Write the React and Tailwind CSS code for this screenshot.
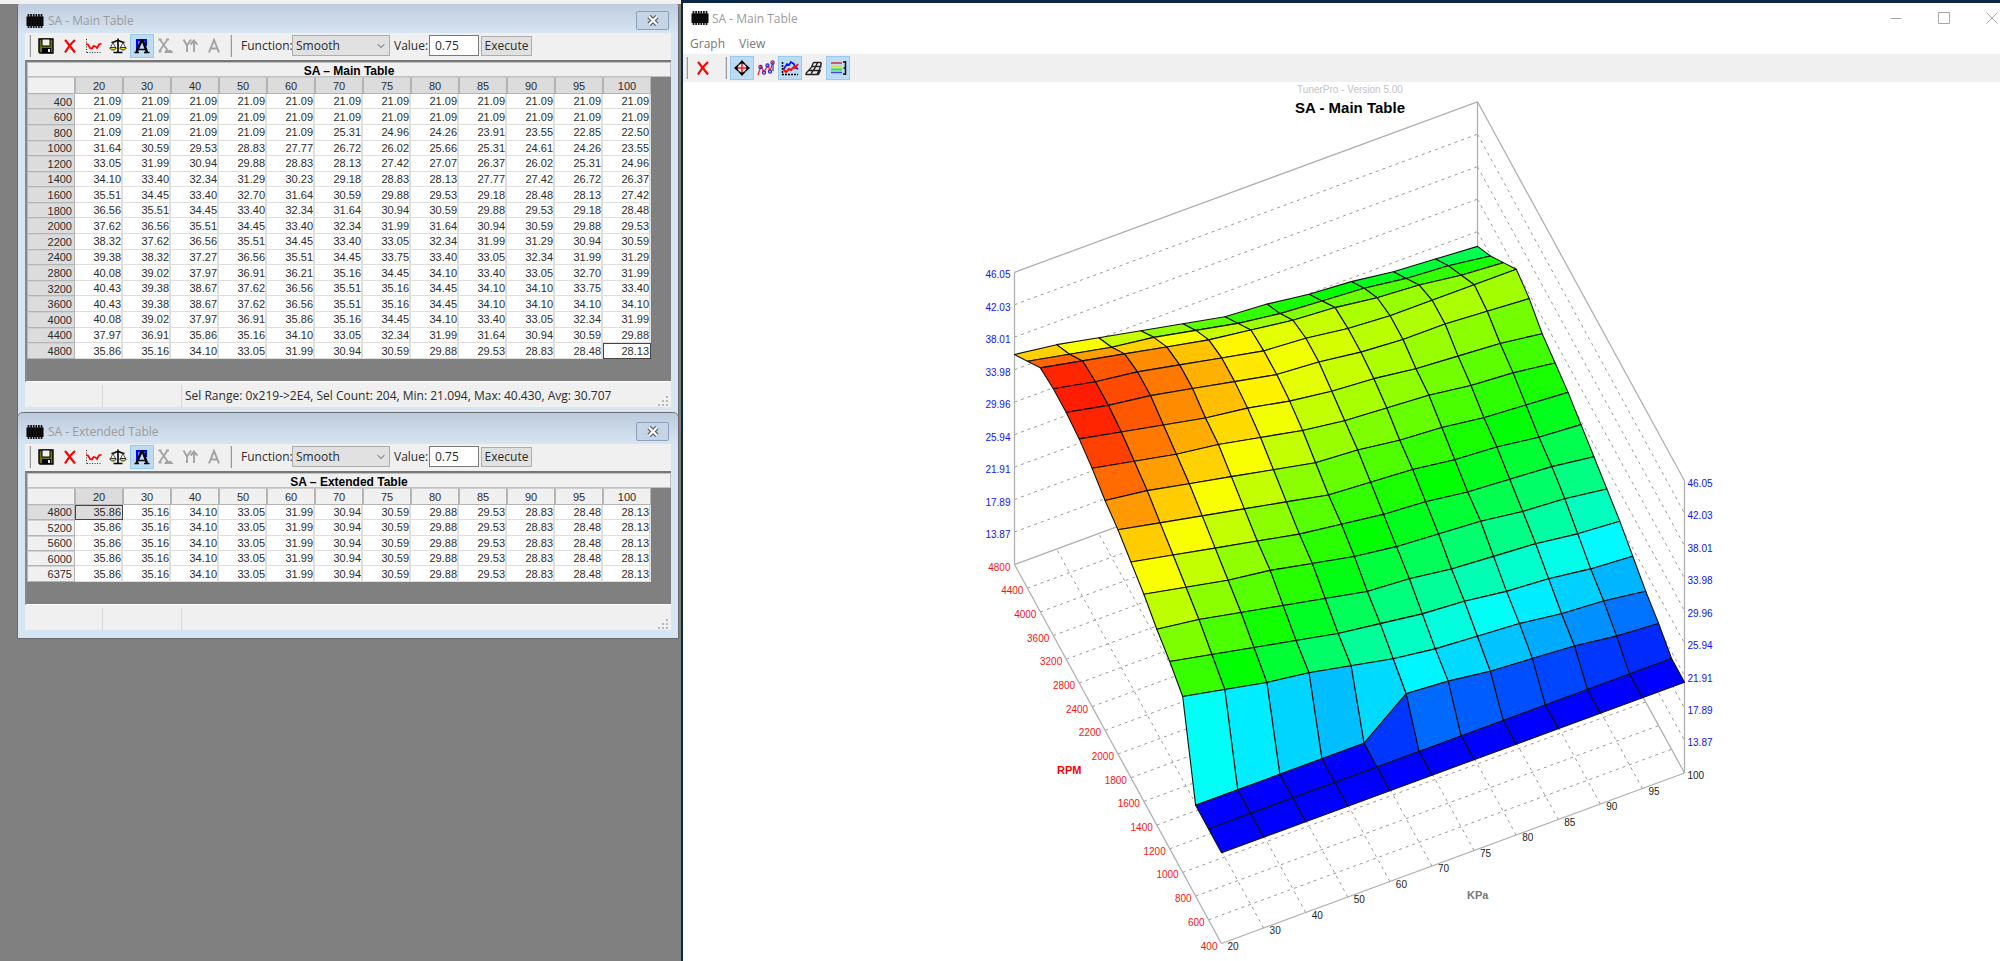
import React from 'react';
import { ChevronDown } from 'lucide-react';

const LOADS = [20, 30, 40, 50, 60, 70, 75, 80, 85, 90, 95, 100];

const MAIN_ROWS = [
  [400, '21.09 21.09 21.09 21.09 21.09 21.09 21.09 21.09 21.09 21.09 21.09 21.09'],
  [600, '21.09 21.09 21.09 21.09 21.09 21.09 21.09 21.09 21.09 21.09 21.09 21.09'],
  [800, '21.09 21.09 21.09 21.09 21.09 25.31 24.96 24.26 23.91 23.55 22.85 22.50'],
  [1000, '31.64 30.59 29.53 28.83 27.77 26.72 26.02 25.66 25.31 24.61 24.26 23.55'],
  [1200, '33.05 31.99 30.94 29.88 28.83 28.13 27.42 27.07 26.37 26.02 25.31 24.96'],
  [1400, '34.10 33.40 32.34 31.29 30.23 29.18 28.83 28.13 27.77 27.42 26.72 26.37'],
  [1600, '35.51 34.45 33.40 32.70 31.64 30.59 29.88 29.53 29.18 28.48 28.13 27.42'],
  [1800, '36.56 35.51 34.45 33.40 32.34 31.64 30.94 30.59 29.88 29.53 29.18 28.48'],
  [2000, '37.62 36.56 35.51 34.45 33.40 32.34 31.99 31.64 30.94 30.59 29.88 29.53'],
  [2200, '38.32 37.62 36.56 35.51 34.45 33.40 33.05 32.34 31.99 31.29 30.94 30.59'],
  [2400, '39.38 38.32 37.27 36.56 35.51 34.45 33.75 33.40 33.05 32.34 31.99 31.29'],
  [2800, '40.08 39.02 37.97 36.91 36.21 35.16 34.45 34.10 33.40 33.05 32.70 31.99'],
  [3200, '40.43 39.38 38.67 37.62 36.56 35.51 35.16 34.45 34.10 34.10 33.75 33.40'],
  [3600, '40.43 39.38 38.67 37.62 36.56 35.51 35.16 34.45 34.10 34.10 34.10 34.10'],
  [4000, '40.08 39.02 37.97 36.91 35.86 35.16 34.45 34.10 33.40 33.05 32.34 31.99'],
  [4400, '37.97 36.91 35.86 35.16 34.10 33.05 32.34 31.99 31.64 30.94 30.59 29.88'],
  [4800, '35.86 35.16 34.10 33.05 31.99 30.94 30.59 29.88 29.53 28.83 28.48 28.13'],
].map(([rpm, cells]) => ({ rpm, cells: cells.split(' ') }));

const EXTENDED_ROWS = [4800, 5200, 5600, 6000, 6375].map((rpm) => ({
  rpm,
  cells: MAIN_ROWS[MAIN_ROWS.length - 1].cells,
}));

function ChipIcon() {
  return (
    <svg width="18" height="14" viewBox="0 0 18 14" className="shrink-0" aria-hidden="true">
      <rect x="0.5" y="2.5" width="17" height="9.5" fill="#000" />
      <path d="M2.5 0v14M5.1 0v14M7.7 0v14M10.3 0v14M12.9 0v14M15.5 0v14" stroke="#111" strokeWidth="1.7" />
    </svg>
  );
}

function SaveIcon() {
  return (
    <svg width="16" height="16" viewBox="0 0 16 16" aria-hidden="true">
      <path d="M1 1h14v14H2l-1-1z" fill="#6f6f12" stroke="#000" strokeWidth="1.4" />
      <rect x="4" y="1" width="8" height="7" fill="#f0f0f0" stroke="#000" />
      <rect x="4" y="10" width="9" height="5" fill="#000" />
      <rect x="10" y="11" width="2" height="3" fill="#e8e8e8" />
    </svg>
  );
}

function RedXIcon() {
  return (
    <svg width="16" height="16" viewBox="0 0 16 16" aria-hidden="true">
      <path d="M3 2C6 5.5 9 9.500 13 14.500M13 2C9.500 5 6 9.500 3 14.500" fill="none" stroke="#f00" strokeWidth="2.2" />
    </svg>
  );
}

function TraceIcon() {
  return (
    <svg width="16" height="16" viewBox="0 0 16 16" aria-hidden="true">
      <path d="M0.5 1v14M1 14.5h15" stroke="#333" strokeDasharray="1 1.5" />
      <path d="M0 6l2 .5 2 3.5 2 .5 1.500-2.500 2 .5 1.500 1.500 2-3.500 2.500-1" fill="none" stroke="#f00" strokeWidth="1.7" />
    </svg>
  );
}

function ScalesIcon() {
  return (
    <svg width="18" height="16" viewBox="0 0 18 16" aria-hidden="true">
      <path d="M9 0.500v14M2.500 4.500C5 4.500 7 2.500 9 2.500s4 2 6.500 2M4.500 14.500h9" fill="none" stroke="#000" strokeWidth="1.6" />
      <path d="M4 4.500L1 10.500h6zM14 4.500l-3 6h6z" fill="#f0f0f0" stroke="#333" strokeWidth="0.8" />
      <path d="M1 9.500h6c0 1.500-1 2.500-3 2.500s-3-1-3-2.500zM11 9.500h6c0 1.500-1 2.500-3 2.500s-3-1-3-2.500z" fill="#e6e020" stroke="#222" strokeWidth="0.9" />
    </svg>
  );
}

function DeltaIcon() {
  return (
    <svg width="16" height="16" viewBox="0 0 16 16" aria-hidden="true">
      <path d="M3 12V2h9v6" fill="#6f8cff" stroke="#00f" strokeWidth="2" />
      <path d="M8.500 2.500L3.500 13.500h9z" fill="#bcdcf4" />
      <path d="M8 1.500L2.500 14M8.300 1.500L13 14" fill="none" stroke="#000" strokeWidth="2.4" />
      <path d="M0.500 14.500h4.500M10 14.500h5.500M5 11.500h7" stroke="#000" strokeWidth="1.4" />
    </svg>
  );
}

function ScaleXIcon() {
  return (
    <svg width="16" height="16" viewBox="0 0 16 16" aria-hidden="true">
      <path d="M2 1.500L10 13M9.500 1.500L1.500 13M0.500 1.500h3M8 1.500h3M0.500 13.500h3" fill="none" stroke="#a3a3a3" strokeWidth="1.8" />
      <path d="M6 15c2-4 3-4 4-3s2-1 3 0l2.500 3z" fill="#a3a3a3" />
    </svg>
  );
}

function ScaleYIcon() {
  return (
    <svg width="16" height="16" viewBox="0 0 16 16" aria-hidden="true">
      <path d="M1.500 1.500L5 7.500l4-6M5 7.500V14M12 2.500V14M8.500 6.500L12 2.500l3.500 4" fill="none" stroke="#a3a3a3" strokeWidth="1.9" />
    </svg>
  );
}

function LetterAIcon() {
  return (
    <svg width="16" height="16" viewBox="0 0 16 16" aria-hidden="true">
      <path d="M3 14.500L8 2l5 12.500M4.500 10.500h7" fill="none" stroke="#a3a3a3" strokeWidth="2" />
    </svg>
  );
}

function MoveIcon() {
  return (
    <svg width="16" height="16" viewBox="0 0 16 16" aria-hidden="true">
      <path d="M8 0l4 4.500h-8zM8 16l4-4.500h-8zM0 8l4.500-4v8zM16 8l-4.500-4v8z" fill="#000" />
      <circle cx="8" cy="8" r="4.600" fill="#e4f0fa" stroke="#111" />
      <path d="M8 3.500v9M3.500 8h9" stroke="#e22" strokeWidth="1.6" />
    </svg>
  );
}

function PointsIcon() {
  return (
    <svg width="18" height="16" viewBox="0 0 18 16" aria-hidden="true">
      <path d="M1 15L4 6l3 6 4-7 2 6 3-9" fill="none" stroke="#f22" strokeWidth="1.3" />
      <g fill="none" stroke="#33c" strokeWidth="1.2">
        <circle cx="3.500" cy="7" r="1.600" />
        <circle cx="7" cy="12.500" r="1.600" />
        <circle cx="10.500" cy="5.500" r="1.600" />
        <circle cx="13" cy="11.500" r="1.600" />
        <circle cx="15.500" cy="2.500" r="1.600" />
        <path d="M16 4v7" />
      </g>
    </svg>
  );
}

function TracesIcon() {
  return (
    <svg width="18" height="16" viewBox="0 0 18 16" aria-hidden="true">
      <path d="M1.500 2v13M1 14.500h16" stroke="#000" strokeWidth="1.5" strokeDasharray="2 1" />
      <path d="M2 10l4-6 2 1 2-3 3 2 1 3 3 2" fill="none" stroke="#11f" strokeWidth="1.7" />
      <path d="M2 9l3 3 3-3 2 1 3-3 1 1 3-4" fill="none" stroke="#e11" strokeWidth="2" />
    </svg>
  );
}

function SurfaceIcon() {
  return (
    <svg width="18" height="15" viewBox="0 0 18 15" aria-hidden="true">
      <path
        d="M8.500 1.500h7.500M6.500 5.500h10M4 9.500h11M0.500 13.500h13M8.500 1.500L6.500 6C5 9 3 9 0.500 13.500M12.500 1.500L10.500 6C9 9 7 10 6 13.500M16.500 1.500L15 7c-1 3-2 3.500-3 6.500M15.500 9l-2 4.500"
        fill="none"
        stroke="#222"
        strokeWidth="1.4"
      />
    </svg>
  );
}

function LegendIcon() {
  return (
    <svg width="17" height="14" viewBox="0 0 17 14" aria-hidden="true">
      <path d="M1 2h11" stroke="#c33" strokeWidth="1.5" />
      <path d="M1 5.500h11" stroke="#e6d84a" strokeWidth="2" />
      <path d="M1 8.500h11" stroke="#2e3" strokeWidth="2" />
      <path d="M1 11.500h11" stroke="#44e" strokeWidth="1.5" />
      <path d="M15.500 0v14M13 1h3M13 13h3M13.500 7h2" stroke="#111" strokeWidth="1.5" />
    </svg>
  );
}

function ToolButton({ label, active, children }) {
  return (
    <button
      type="button"
      aria-label={label}
      className={
        active
          ? 'flex h-6 w-6 items-center justify-center border border-[#99c9ef] bg-[#bcdcf4]'
          : 'flex h-6 w-6 items-center justify-center'
      }
    >
      {children}
    </button>
  );
}

function Grip() {
  return <span className="h-[22px] w-[2px] shrink-0 border-r border-[#9a9a9a] bg-[#d8d8d8]" />;
}

function TableGrid({ title, rows, active, selectedAll }) {
  const headCell = 'border border-[#b4b4b4] border-t-[#d0d0d0] p-0 font-normal';
  const headColor = (on) => (on ? 'bg-[#dcdcdc]' : 'bg-[#f0f0f0]');
  return (
    <div className="border-t-2 border-b border-l-2 border-t-[#777] border-b-white border-l-[#888] bg-[#808080] pb-[22px] font-['Liberation_Sans',sans-serif]">
      <h2 className="flex h-[15px] items-center justify-center border border-[#c0c0c0] bg-[#f0f0f0] pt-[3px] text-[12px] leading-[12px] font-bold text-black">
        {title}
      </h2>
      <table
        className={
          selectedAll
            ? 'h-[282px] w-[624px] table-fixed border-separate border-spacing-0 text-[11px] leading-[12px] text-[#2c2c2c]'
            : 'h-[94px] w-[624px] table-fixed border-separate border-spacing-0 text-[11px] leading-[12px] text-[#2c2c2c]'
        }
      >
        <tbody>
          <tr>
            <th className={`${headCell} bg-[#f0f0f0]`} />
            {LOADS.map((load, c) => (
              <th key={load} scope="col" className={`${headCell} pt-px ${headColor(selectedAll || c === active[1])}`}>
                {load}
              </th>
            ))}
          </tr>
          {rows.map((row, r) => (
            <tr key={row.rpm}>
              <th scope="row" className={`${headCell} pr-[2px] text-right ${headColor(selectedAll || r === active[0])}`}>
                {row.rpm}
              </th>
              {row.cells.map((cell, c) => {
                const isActive = r === active[0] && c === active[1];
                return (
                  <td
                    key={c}
                    className={
                      isActive
                        ? `border border-[#444] p-0 pr-px text-right ${selectedAll ? 'bg-white' : 'bg-[#dcdcdc]'}`
                        : 'border-r-2 border-b border-[#dedede] bg-white p-0 text-right'
                    }
                  >
                    {cell}
                  </td>
                );
              })}
            </tr>
          ))}
        </tbody>
      </table>
    </div>
  );
}

function TableWindow({ id, title, rows, active, selectedAll, status, className }) {
  return (
    <section
      className={`relative rounded-t-md border border-[#6b6b6b] bg-[#d7e4f2] px-[7px] pb-2 ${className}`}
    >
      <header className="-mx-[7px] flex h-[31px] items-center rounded-t-md bg-linear-to-b from-[#bccbdc] to-[#d7e4f2] pt-[6px] pr-[9px] pl-2">
        <ChipIcon />
        <h1 className="ml-1 flex-1 text-[12px] leading-4 text-[#9b9b9b]">{title}</h1>
        <button
          type="button"
          aria-label="Close"
          className="flex h-[19px] w-[33px] items-center justify-center rounded-[2px] border border-[#8c9fbd] bg-[#c6d5e6]"
        >
          <svg width="14" height="11" viewBox="0 0 14 11" aria-hidden="true">
            <path d="M3 1.500l8 8M11 1.500l-8 8" stroke="#5d636e" strokeWidth="4.600" />
            <path d="M3 1.500l8 8M11 1.500l-8 8" stroke="#fff" strokeWidth="2.200" />
          </svg>
        </button>
      </header>

      <div className="bg-[#f0f0f0]">
        <div className="flex h-[27px] items-center pb-[2px] pl-1 text-[12px] leading-4 text-[#2b2b2b]">
          <Grip />
          <div className="ml-[3px] flex">
            <ToolButton label="Save"><SaveIcon /></ToolButton>
            <ToolButton label="Discard changes"><RedXIcon /></ToolButton>
            <ToolButton label="Graph"><TraceIcon /></ToolButton>
            <ToolButton label="Compare"><ScalesIcon /></ToolButton>
            <ToolButton label="Show difference" active><DeltaIcon /></ToolButton>
            <ToolButton label="Scale X"><ScaleXIcon /></ToolButton>
            <ToolButton label="Scale Y"><ScaleYIcon /></ToolButton>
            <ToolButton label="Axis"><LetterAIcon /></ToolButton>
          </div>
          <span className="ml-1 flex"><Grip /></span>
          <label htmlFor={`${id}-function`} className="ml-[9px] w-[51px]">Function:</label>
          <div className="relative">
            <select
              id={`${id}-function`}
              className="h-[21px] w-[98px] appearance-none border border-[#adadad] bg-[#e1e1e1] pl-[3px]"
            >
              <option>Smooth</option>
            </select>
            <ChevronDown size={12} className="pointer-events-none absolute top-[5px] right-[3px] text-[#555]" />
          </div>
          <label htmlFor={`${id}-value`} className="ml-1 w-[35px]">Value:</label>
          <input
            id={`${id}-value`}
            defaultValue="0.75"
            className="h-[21px] w-[50px] border border-[#7a7a7a] bg-white pl-[5px]"
          />
          <button type="button" className="ml-[2px] h-5 w-[51px] border border-[#adadad] bg-[#e1e1e1]">
            Execute
          </button>
        </div>

        <TableGrid title={title.replace('-', '–')} rows={rows} active={active} selectedAll={selectedAll} />

        <footer className="mt-[3px] flex h-[22px] text-[12px] leading-[22px] text-[#2b2b2b]">
          <span className="w-[78px] border-r border-[#d7d7d7]" />
          <span className="w-[79px] border-r border-[#d7d7d7]" />
          <span className="flex-1 pl-[3px] whitespace-nowrap">{status}</span>
          <svg width="12" height="22" viewBox="0 0 12 22" className="mr-px" fill="#b8b8b8" aria-hidden="true">
            <path d="M8 11h2v2h-2zM8 15h2v2h-2zM8 19h2v2h-2zM4 15h2v2h-2zM4 19h2v2h-2zM0 19h2v2h-2z" />
          </svg>
        </footer>
      </div>
    </section>
  );
}

// Parallel projection: column index, row index and height above the floor to chart units.
const Z_FLOOR = 9.84;
const Z_TOP = 46.05;
const Z_TICKS = [13.87, 17.89, 21.91, 25.94, 29.96, 33.98, 38.01, 42.03, 46.05];
const LAST_COL = LOADS.length - 1;
const LAST_ROW = MAIN_ROWS.length - 1;

function project(col, row, z = Z_FLOOR) {
  return [
    538.5 + (col * 463) / LAST_COL - (row * 207) / LAST_ROW,
    861.5 - (col * 170.5) / LAST_COL - (row * 379) / LAST_ROW - (z - Z_FLOOR) * 8.07,
  ];
}

// Blue, cyan, green, yellow, red
function heatColor(value) {
  const t = Math.min(1, Math.max(0, (value - 21.094) / (40.43 - 21.094))) * 4;
  const up = Math.round((t % 1) * 255);
  if (t < 1) return `rgb(0,${up},255)`;
  if (t < 2) return `rgb(0,255,${255 - up})`;
  if (t < 3) return `rgb(${up},255,0)`;
  return t < 4 ? `rgb(255,${255 - up},0)` : 'rgb(255,0,0)';
}

function Segment({ from, to, dashed }) {
  return (
    <line
      x1={from[0]}
      y1={from[1]}
      x2={to[0]}
      y2={to[1]}
      stroke={dashed ? '#999' : '#b0b0b0'}
      strokeWidth={dashed ? 1 : 1.3}
      strokeDasharray={dashed ? '3 4' : undefined}
    />
  );
}

function SurfaceChart() {
  const quads = [];
  for (let r = LAST_ROW - 1; r >= 0; r--) {
    for (let c = LAST_COL - 1; c >= 0; c--) {
      const corners = [[c, r], [c + 1, r], [c + 1, r + 1], [c, r + 1]];
      const values = corners.map(([cc, rr]) => Number(MAIN_ROWS[rr].cells[cc]));
      quads.push({
        key: `${r}-${c}`,
        points: corners.map(([cc, rr], i) => project(cc, rr, values[i]).join(',')).join(' '),
        fill: heatColor(values.reduce((a, b) => a + b, 0) / 4),
      });
    }
  }

  return (
    <svg
      viewBox="0 0 1317 879"
      className="min-h-0 w-full flex-1 font-['Liberation_Sans',sans-serif] text-[10px]"
      role="img"
      aria-label="SA - Main Table surface graph"
    >
      <text x="667" y="11" textAnchor="middle" fill="#c4c4c4">TunerPro - Version 5.00</text>
      <text x="667" y="31" textAnchor="middle" className="text-[15px] font-bold">SA - Main Table</text>

      {/* floor grid */}
      {MAIN_ROWS.map((row, r) => (
        <Segment key={row.rpm} from={project(0, r)} to={project(LAST_COL, r)} dashed={r > 0 && r < LAST_ROW} />
      ))}
      {LOADS.map((load, c) => (
        <Segment key={load} from={project(c, 0)} to={project(c, LAST_ROW)} dashed={c > 0 && c < LAST_COL} />
      ))}

      {/* back and side walls */}
      {Z_TICKS.map((z) => (
        <g key={z}>
          <Segment from={project(0, LAST_ROW, z)} to={project(LAST_COL, LAST_ROW, z)} dashed={z !== Z_TOP} />
          <Segment from={project(LAST_COL, LAST_ROW, z)} to={project(LAST_COL, 0, z)} dashed={z !== Z_TOP} />
        </g>
      ))}
      <Segment from={project(0, LAST_ROW)} to={project(0, LAST_ROW, Z_TOP)} />
      <Segment from={project(LAST_COL, LAST_ROW)} to={project(LAST_COL, LAST_ROW, Z_TOP)} />
      <Segment from={project(LAST_COL, 0)} to={project(LAST_COL, 0, Z_TOP)} />

      <g stroke="#111" strokeWidth="1.1" strokeLinejoin="round">
        {quads.map((q) => (
          <polygon key={q.key} points={q.points} fill={q.fill} />
        ))}
      </g>

      <g fill="#11f">
        {Z_TICKS.map((z) => {
          const [lx, ly] = project(0, LAST_ROW, z);
          const [rx, ry] = project(LAST_COL, 0, z);
          return (
            <g key={z}>
              <text x={lx - 4} y={ly + 6} textAnchor="end">{z.toFixed(2)}</text>
              <text x={rx + 3} y={ry + 6}>{z.toFixed(2)}</text>
            </g>
          );
        })}
      </g>
      <g fill="#f11">
        {MAIN_ROWS.map((row, r) => {
          const [x, y] = project(0, r);
          return <text key={row.rpm} x={x - 4} y={y + 6} textAnchor="end">{row.rpm}</text>;
        })}
      </g>
      <g fill="#222">
        {LOADS.map((load, c) => {
          const [x, y] = project(c, 0);
          return <text key={load} x={x + (c === LAST_COL ? 3 : 6)} y={y + 6}>{load}</text>;
        })}
      </g>
      <text x="374" y="692" fill="#f00" className="text-[11px] font-bold">RPM</text>
      <text x="784" y="817" fill="#777" className="text-[11px] font-bold">KPa</text>
    </svg>
  );
}

function CaptionButton({ label, d }) {
  return (
    <button type="button" aria-label={label}>
      <svg width="12" height="12" viewBox="0 0 12 12" fill="none" stroke="#a8a8a8" aria-hidden="true">
        <path d={d} />
      </svg>
    </button>
  );
}

function GraphWindow() {
  return (
    <section className="flex min-w-0 flex-1 flex-col border-t-[3px] border-l-2 border-[#0b2547] bg-white">
      <header className="flex h-[30px] shrink-0 items-center pl-2 text-[#9b9b9b]">
        <ChipIcon />
        <h1 className="ml-[3px] flex-1 pt-px text-[12px] leading-4">SA - Main Table</h1>
        <div className="flex gap-9 pr-[2px]">
          <CaptionButton label="Minimize" d="M0.500 6.500h11" />
          <CaptionButton label="Maximize" d="M0.500 0.500h11v11h-11z" />
          <CaptionButton label="Close" d="M0.500 0.500l11 11M11.500 0.500l-11 11" />
        </div>
      </header>
      <nav className="flex h-[21px] shrink-0 items-center gap-[14px] pl-[7px] text-[12px] leading-4 text-[#777]">
        <button type="button">Graph</button>
        <button type="button">View</button>
      </nav>
      <div className="flex h-7 shrink-0 items-center bg-[#f0f0f0] pl-[3px]">
        <Grip />
        <span className="ml-[3px] flex"><ToolButton label="Close graph"><RedXIcon /></ToolButton></span>
        <span className="mr-[3px] ml-[10px] flex"><Grip /></span>
        <ToolButton label="Rotate" active><MoveIcon /></ToolButton>
        <ToolButton label="Edit points"><PointsIcon /></ToolButton>
        <ToolButton label="Show trace" active><TracesIcon /></ToolButton>
        <ToolButton label="Surface"><SurfaceIcon /></ToolButton>
        <ToolButton label="Show scale" active><LegendIcon /></ToolButton>
      </div>
      <SurfaceChart />
    </section>
  );
}

export default function App() {
  return (
    <div className="flex h-screen overflow-hidden font-['Open_Sans','Noto_Sans',sans-serif]">
      <main className="flex w-[681px] shrink-0 flex-col bg-[#808080]">
        <div className="relative z-10 h-1 shrink-0 bg-[#f0f0f0]" />
        <div className="pr-[2px] pl-[17px]">
          <TableWindow
            id="main"
            title="SA - Main Table"
            rows={MAIN_ROWS}
            active={[16, 11]}
            selectedAll
            status="Sel Range: 0x219->2E4, Sel Count: 204, Min: 21.094, Max: 40.430, Avg: 30.707"
            className="-mt-[3px]"
          />
          <TableWindow
            id="extended"
            title="SA - Extended Table"
            rows={EXTENDED_ROWS}
            active={[0, 0]}
            status=""
            className="-mt-1"
          />
        </div>
      </main>
      <GraphWindow />
    </div>
  );
}
